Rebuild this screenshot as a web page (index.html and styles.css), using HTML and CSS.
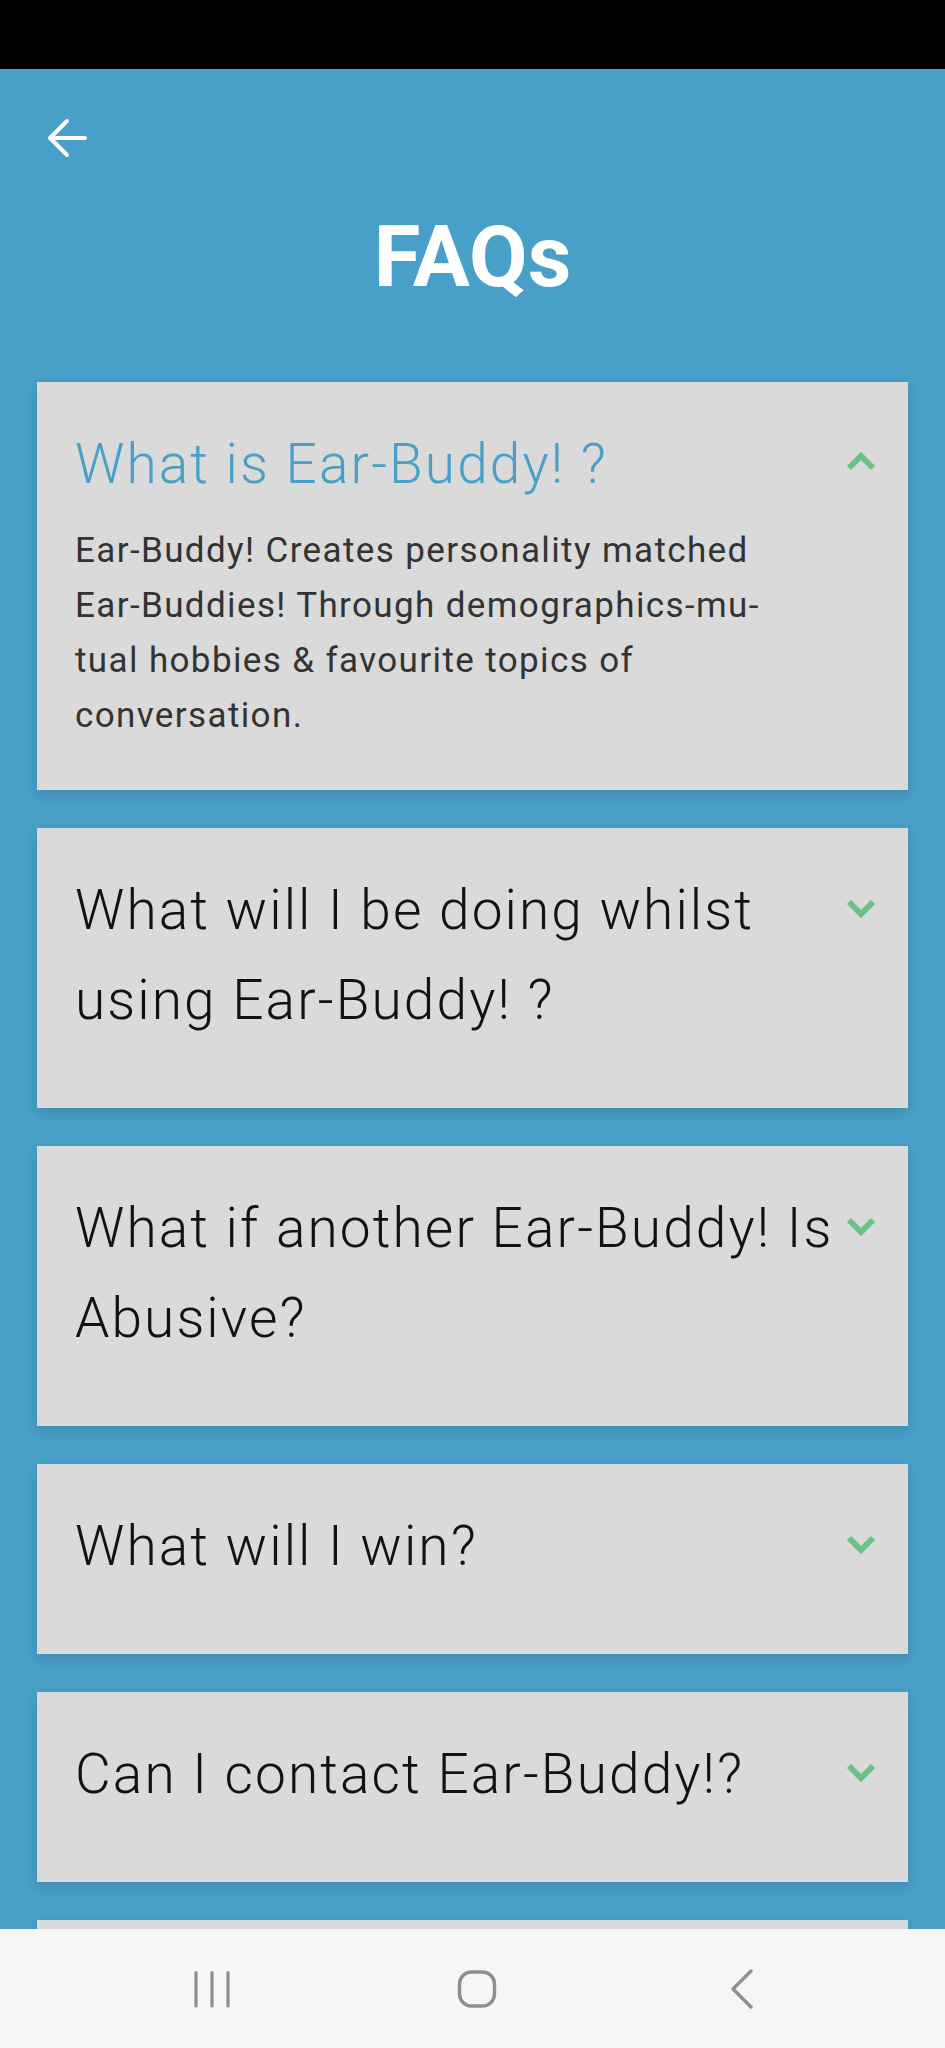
FILE: index.html
```html
<!DOCTYPE html>
<html lang="en">
<head>
<meta charset="utf-8">
<title>FAQs</title>
<link rel="stylesheet" href="styles.css">
</head>
<body>
<div class="screen">
  <div class="status"></div>
  <main class="main">
    <div class="topbar">
      <svg class="back" width="42" height="40" viewBox="0 0 42 40" aria-label="Back">
        <path d="M39 20H4M21 3L4 20L21 37" fill="none" stroke="#fff" stroke-width="4" stroke-linecap="round" stroke-linejoin="round"/>
      </svg>
    </div>
    <h1 class="title">FAQs</h1>
    <div class="list">
      <section class="card open">
        <div class="head">
          <h2 class="q">What is Ear-Buddy! ?</h2>
          <svg class="chev" width="30" height="20" viewBox="0 0 30 20"><path d="M3 16L15 4L27 16" fill="none" stroke="#6AC384" stroke-width="6"/></svg>
        </div>
        <p class="answer">Ear-Buddy! Creates personality matched Ear-Buddies! Through demographics-mu&shy;tual hobbies &amp; favourite topics of conversation.</p>
      </section>
      <section class="card">
        <div class="head">
          <h2 class="q">What will I be doing whilst using Ear-Buddy! ?</h2>
          <svg class="chev" width="30" height="20" viewBox="0 0 30 20"><path d="M3 4L15 16L27 4" fill="none" stroke="#6AC384" stroke-width="6"/></svg>
        </div>
      </section>
      <section class="card">
        <div class="head">
          <h2 class="q">What if another Ear-Buddy! Is Abusive?</h2>
          <svg class="chev" width="30" height="20" viewBox="0 0 30 20"><path d="M3 4L15 16L27 4" fill="none" stroke="#6AC384" stroke-width="6"/></svg>
        </div>
      </section>
      <section class="card">
        <div class="head">
          <h2 class="q">What will I win?</h2>
          <svg class="chev" width="30" height="20" viewBox="0 0 30 20"><path d="M3 4L15 16L27 4" fill="none" stroke="#6AC384" stroke-width="6"/></svg>
        </div>
      </section>
      <section class="card">
        <div class="head">
          <h2 class="q">Can I contact Ear-Buddy!?</h2>
          <svg class="chev" width="30" height="20" viewBox="0 0 30 20"><path d="M3 4L15 16L27 4" fill="none" stroke="#6AC384" stroke-width="6"/></svg>
        </div>
      </section>
      <section class="card">
        <div class="head">
          <h2 class="q">&nbsp;</h2>
          <svg class="chev" width="30" height="20" viewBox="0 0 30 20"><path d="M3 4L15 16L27 4" fill="none" stroke="#6AC384" stroke-width="6"/></svg>
        </div>
      </section>
    </div>
  </main>
  <nav class="navbar">
    <svg class="nav-icon" width="40" height="40" viewBox="0 0 40 40" aria-label="Recent apps">
      <path d="M4 3.5V37M20 3.5V37M36 3.5V37" fill="none" stroke="#8E8E8E" stroke-width="3.2" stroke-linecap="round"/>
    </svg>
    <svg class="nav-icon" width="40" height="40" viewBox="0 0 40 40" aria-label="Home">
      <rect x="2.5" y="3" width="35" height="34" rx="12" fill="none" stroke="#8E8E8E" stroke-width="3.4"/>
    </svg>
    <svg class="nav-icon" width="40" height="40" viewBox="0 0 40 40" aria-label="Back">
      <path d="M29 2L11 20L29 38" fill="none" stroke="#8E8E8E" stroke-width="3.2" stroke-linecap="round" stroke-linejoin="round"/>
    </svg>
  </nav>
</div>
</body>
</html>
```
FILE: styles.css
```css
html, body {
  margin: 0;
  padding: 0;
}
body {
  font-family: Roboto, "Noto Sans", "Liberation Sans", sans-serif;
  background: #489FC7;
}
.screen {
  width: 945px;
  height: 2048px;
  display: flex;
  flex-direction: column;
  overflow: hidden;
}
.status {
  height: 69px;
  flex: none;
  background: #000;
}
.main {
  flex: 1;
  min-height: 0;
  overflow: hidden;
  background: #489FC7;
  padding: 0 37px;
}
.topbar {
  padding: 49px 0 0 9px;
  height: 40px;
}
.back {
  display: block;
}
.title {
  margin: 57px 0 82px;
  font-size: 85px;
  line-height: 85px;
  font-weight: 700;
  color: #fff;
  text-align: center;
}
.list {
  display: flex;
  flex-direction: column;
  gap: 38px;
}
.card {
  background: #DADADA;
  padding: 37px 32px 63px 38px;
  box-shadow: 0 5px 12px rgba(0, 0, 0, 0.13);
}
.card.open {
  padding-bottom: 47px;
}
.head {
  display: flex;
  align-items: flex-start;
  gap: 2px;
}
.q {
  flex: 1;
  min-width: 0;
  margin: 0;
  font-size: 55px;
  line-height: 90px;
  font-weight: 300;
  letter-spacing: 2.1px;
  color: #121212;
}
.card.open .q {
  color: #4A9FC6;
}
.chev {
  flex: none;
  display: block;
  margin-top: 33px;
}
.answer {
  margin: 14px 0 0;
  max-width: 720px;
  font-size: 35px;
  line-height: 55px;
  letter-spacing: 1.38px;
  color: #333;
  hyphens: manual;
}
.navbar {
  height: 119px;
  flex: none;
  background: #F6F6F6;
  display: grid;
  grid-template-columns: 265px 265px 265px;
  padding-left: 79px;
  align-items: center;
  justify-items: center;
}
.nav-icon {
  display: block;
}
```
